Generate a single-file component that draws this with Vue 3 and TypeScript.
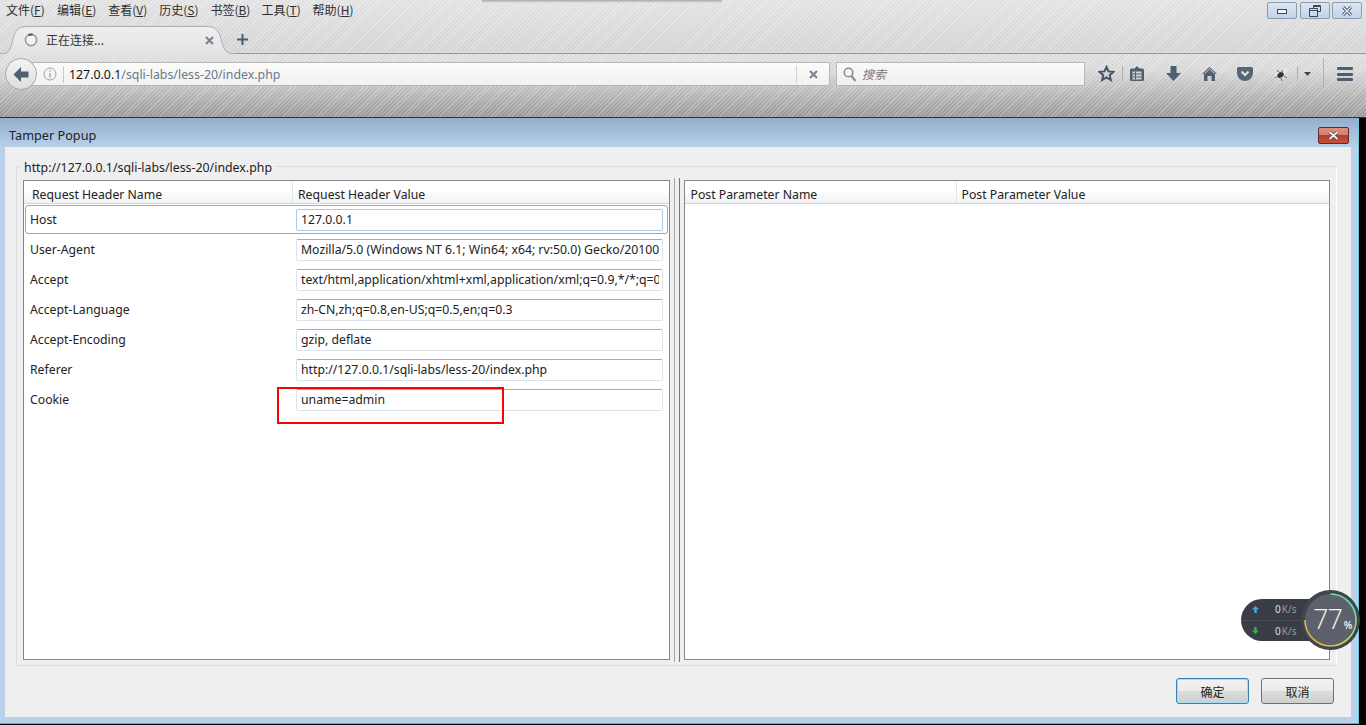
<script setup lang="ts">
const menus = [
  { cn: '文件', key: 'F' },
  { cn: '编辑', key: 'E' },
  { cn: '查看', key: 'V' },
  { cn: '历史', key: 'S' },
  { cn: '书签', key: 'B' },
  { cn: '工具', key: 'T' },
  { cn: '帮助', key: 'H' },
]
const rows = [
  { name: 'Host', value: '127.0.0.1' },
  { name: 'User-Agent', value: 'Mozilla/5.0 (Windows NT 6.1; Win64; x64; rv:50.0) Gecko/20100101 Firefox/50.0' },
  { name: 'Accept', value: 'text/html,application/xhtml+xml,application/xml;q=0.9,*/*;q=0.8' },
  { name: 'Accept-Language', value: 'zh-CN,zh;q=0.8,en-US;q=0.5,en;q=0.3' },
  { name: 'Accept-Encoding', value: 'gzip, deflate' },
  { name: 'Referer', value: 'http://127.0.0.1/sqli-labs/less-20/index.php' },
  { name: 'Cookie', value: 'uname=admin' },
]
</script>

<template>
  <div class="screen">
    <header class="browser">
      <div class="topshadow" />
      <nav class="menubar">
        <span v-for="m in menus" :key="m.key" class="menu">{{ m.cn }}(<u>{{ m.key }}</u>)</span>
        <div class="wincaps">
          <span class="cap"><svg width="12" height="8" viewBox="0 0 12 8"><rect x="1.500" y="2.500" width="9" height="4" fill="#f4f6f9" stroke="#38465a" /></svg></span>
          <span class="cap"><svg width="12" height="12" viewBox="0 0 12 12"><path d="M4.500 3V.5h7v6H8.500M.5 3.500h8v8h-8zM.5 5.500h8M4.500 1.500h7" fill="none" stroke="#38465a" /></svg></span>
          <span class="cap"><svg width="12" height="10" viewBox="0 0 12 10"><path d="M2 1l8 8M10 1l-8 8" stroke="#38465a" stroke-width="3" /><path d="M2 1l8 8M10 1l-8 8" stroke="#f4f6f9" stroke-width="1.200" /></svg></span>
        </div>
      </nav>
      <div class="tabstrip">
        <div class="tab">
          <svg class="tabshape" width="236" height="28" viewBox="0 0 236 28">
            <defs>
              <linearGradient id="tabfill" x1="0" y1="0" x2="0" y2="1">
                <stop offset="0" stop-color="#efefef" />
                <stop offset="1" stop-color="#e4e4e4" />
              </linearGradient>
            </defs>
            <path d="M0 28V27.500H3C10 27.500 11 21 13 13C15 4 19 .5 27 .5H207C215 .5 219 4 221 13C223 21 225 27.500 233 27.500H236V28z" fill="url(#tabfill)" />
            <path d="M0 27.500H3C10 27.500 11 21 13 13C15 4 19 .5 27 .5H207C215 .5 219 4 221 13C223 21 225 27.500 233 27.500H236" fill="none" stroke="#a7adb4" />
          </svg>
          <svg class="spinner" width="14" height="14" viewBox="0 0 14 14"><circle cx="7" cy="7" r="5.600" fill="#f4f4f4" stroke="#9a9a9a" stroke-width="1.600" /><path d="M4.500 2.200a5.600 5.600 0 0 1 4-.6" stroke="#555" stroke-width="2" fill="none" /></svg>
          <span class="tabtitle">正在连接...</span>
          <svg class="tabclose" width="9" height="9" viewBox="0 0 9 9"><path d="M1 1l7 7M8 1l-7 7" stroke="#7b8592" stroke-width="2.200" /></svg>
        </div>
        <svg class="newtab" width="11" height="11" viewBox="0 0 11 11"><path d="M5.500 0v11M0 5.500h11" stroke="#4d5a69" stroke-width="2" /></svg>
      </div>
      <div class="navbar">
        <div class="backbtn"><svg width="16" height="15" viewBox="0 0 16 15"><path d="M8 0L.5 7.500 8 15v-4.500h7.500v-6H8z" fill="#4f5e70" /></svg></div>
        <div class="urlbar">
          <svg class="info" width="14" height="14" viewBox="0 0 14 14"><circle cx="7" cy="7" r="6" fill="none" stroke="#9aa0a6" /><path d="M7 6v4.500M7 3.300v1.500" stroke="#9aa0a6" stroke-width="1.400" /></svg>
          <span class="url"><b>127.0.0.1</b>/sqli-labs/less-20/index.php</span>
          <span class="urlstop"><svg width="9" height="9" viewBox="0 0 9 9"><path d="M1 1l7 7M8 1l-7 7" stroke="#7b8592" stroke-width="2.200" /></svg></span>
        </div>
        <div class="search">
          <svg width="14" height="15" viewBox="0 0 14 15"><circle cx="5.500" cy="5.500" r="4.300" fill="none" stroke="#8d8d8d" stroke-width="1.600" /><path d="M8.500 9l4 5" stroke="#8d8d8d" stroke-width="2.200" /></svg>
          <span class="searchtext">搜索</span>
        </div>
        <div class="tools">
          <svg class="t-star" width="17" height="17" viewBox="0 0 17 17"><path d="M8.500 1.800l2 4.600 5 .5-3.800 3.300 1.200 4.900-4.400-2.600-4.400 2.600 1.200-4.900L1.500 6.900l5-.5z" fill="none" stroke="#46566a" stroke-width="2" /></svg>
          <i class="sep" />
          <svg class="t-clip" width="14" height="15" viewBox="0 0 14 15"><path d="M1.500 2.500H4.500L7 0l2.500 2.500h3A1.500 1.500 0 0 1 14 4v9.500a1.500 1.500 0 0 1-1.500 1.500h-11A1.500 1.500 0 0 1 0 13.500V4a1.500 1.500 0 0 1 1.500-1.500z" fill="#4f5e70" /><path d="M2.500 5.500h9v8h-9z" fill="#d4d4d4" /><path d="M2.500 8h9M2.500 11h9M5.500 5.500v8" stroke="#4f5e70" /></svg>
          <svg class="t-down" width="15" height="15" viewBox="0 0 15 15"><path d="M4.500 0h6v7H15l-7.500 8L0 7h4.500z" fill="#4f5e70" /></svg>
          <svg class="t-home" width="15" height="14" viewBox="0 0 15 14"><path d="M7.500 0L15 7h-2v7H9.500V9h-4v5H2V7H0z" fill="#4f5e70" /><path d="M2.500 6.700l5-4.700 5 4.700" fill="none" stroke="#d8d8d8" /></svg>
          <svg class="t-pocket" width="16" height="14" viewBox="0 0 16 14"><path d="M1.500 0h13A1.500 1.500 0 0 1 16 1.500V6A8 8 0 0 1 0 6V1.500A1.500 1.500 0 0 1 1.500 0z" fill="#56667a" /><path d="M4.500 4.500L8 8l3.500-3.500" fill="none" stroke="#e4e4e4" stroke-width="2" /></svg>
          <svg class="t-ext" width="16" height="13" viewBox="0 0 16 13"><path d="M9 1l6-1-1 5-4 1zM1 6l5-2 1 4-4 3z" fill="#e6e6e6" /><ellipse cx="7.500" cy="7" rx="3.500" ry="2.500" transform="rotate(-35 7.500 7)" fill="#333" /><path d="M4 2l3 3M11 8l3 2M2 10l3-2M8 10l1 3M10 2l-2 3" stroke="#666" /></svg>
          <i class="sep sep2" />
          <svg class="t-caret" width="7" height="4" viewBox="0 0 7 4"><path d="M0 0h7L3.500 4z" fill="#39475a" /></svg>
          <i class="sep sep3" />
          <span class="burger"><i /><i /><i /></span>
        </div>
      </div>
    </header>

    <section class="dialog">
      <div class="titlebar">
        <span class="dtitle">Tamper Popup</span>
        <span class="dclose"><svg width="11" height="9" viewBox="0 0 11 9"><path d="M1.500 1l8 7M9.500 1l-8 7" stroke="#4e3a40" stroke-width="3.200" /><path d="M1.500 1l8 7M9.500 1l-8 7" stroke="#f4f4f6" stroke-width="1.800" /></svg></span>
      </div>
      <div class="client">
        <div class="group">
          <span class="legend">http://127.0.0.1/sqli-labs/less-20/index.php</span>
          <div class="panes">
            <div class="pane">
              <div class="thead">
                <span class="th th-left">Request Header Name</span>
                <span class="th">Request Header Value</span>
              </div>
              <div v-for="(r, i) in rows" :key="r.name" class="row" :class="{ selected: i === 0 }">
                <span class="rname">{{ r.name }}</span>
                <span class="rvalue"><span class="rtext">{{ r.value }}</span></span>
              </div>
            </div>
            <div class="splitter" />
            <div class="pane">
              <div class="thead">
                <span class="th th-post">Post Parameter Name</span>
                <span class="th">Post Parameter Value</span>
              </div>
            </div>
          </div>
        </div>
        <div class="buttons">
          <button class="btn primary">确定</button>
          <button class="btn">取消</button>
        </div>
      </div>
      <div class="highlight" />
      <div class="speed">
        <div class="pill">
          <div class="line"><svg width="7" height="7" viewBox="0 0 7 7"><path d="M3.500 0L7 3.500H4.700V7H2.300V3.500H0z" fill="#4aa8e8" /></svg><span class="val">0</span><span class="unit">K/s</span></div>
          <div class="line"><svg width="7" height="7" viewBox="0 0 7 7"><path d="M3.500 7L7 3.500H4.700V0H2.300V3.500H0z" fill="#3fae49" /></svg><span class="val">0</span><span class="unit">K/s</span></div>
        </div>
        <div class="gauge">
          <svg width="59" height="60" viewBox="0 0 60 60" preserveAspectRatio="none">
            <defs>
              <linearGradient id="ring" x1="1" y1="0" x2="0" y2="1">
                <stop offset="0" stop-color="#45e0d0" />
                <stop offset=".55" stop-color="#c4dc58" />
                <stop offset="1" stop-color="#f09a3c" />
              </linearGradient>
            </defs>
            <circle cx="30" cy="30" r="30" fill="#41454e" />
            <circle cx="30" cy="30" r="26" fill="#5d616c" />
            <path d="M30 4A26 26 0 1 1 4 30" fill="none" stroke="url(#ring)" stroke-width="1.600" />
          </svg>
          <span class="pct">77<small>%</small></span>
        </div>
      </div>
    </section>
  </div>
</template>

<style>
html, body { margin: 0; background: #000; }
</style>

<style scoped>
.screen { width: 1366px; height: 725px; overflow: hidden; position: relative; background: #000; font-family: "Noto Sans", "Noto Sans CJK SC", sans-serif; }
.browser {
  height: 118px; box-sizing: border-box; position: relative;
  border-bottom: 1px solid #333;
  background:
    repeating-linear-gradient(135deg, rgba(255,255,255,.22) 0 1px, rgba(0,0,0,.02) 1px 3px),
    linear-gradient(#e6e6e6 0, #d8d8d8 52px, #e2e2e2 53px, #dcdcdc 70px, #9c9c9c 117px);
}
.topshadow { position: absolute; left: 482px; top: 0; width: 240px; height: 3px; background: linear-gradient(#a8a8a8, rgba(168,168,168,0)); }
.menubar { height: 21px; display: flex; align-items: center; padding: 0 0 3px 6px; box-sizing: border-box; gap: 10.100px; font: 12px "Noto Sans CJK SC", sans-serif; color: #2e2e2e; position: relative; }
.menu { width: 41px; white-space: nowrap; }
.wincaps { position: absolute; left: 1267px; top: 2px; display: flex; gap: 2.500px; }
.cap { width: 30px; height: 17px; box-sizing: border-box; border: 1px solid #8b9cb2; border-radius: 2px; background: linear-gradient(#dbe6f3, #c2d3e8); display: flex; align-items: center; justify-content: center; }
.tabstrip { height: 33px; display: flex; align-items: flex-end; position: relative; border-bottom: 1px solid #8e98a2; box-sizing: border-box; }
.tab { margin-left: 14px; width: 213px; height: 28px; margin-bottom: -1px; box-sizing: border-box; position: relative; display: flex; align-items: center; padding: 0 13px 0 10px; font: 12px "Noto Sans CJK SC", sans-serif; color: #333; }
.tabshape { position: absolute; left: -14px; top: 0; }
.spinner { flex: none; margin-right: 8px; position: relative; }
.tabtitle { flex: 1; position: relative; margin-top: -2px; }
.tabclose { position: relative; }
.newtab { margin: 0 0 8px 10px; }
.navbar { height: 44px; display: flex; align-items: flex-start; position: relative; padding-top: 8px; box-sizing: border-box; }
.backbtn { position: absolute; left: 5px; top: 4px; width: 32px; height: 32px; border-radius: 50%; border: 1px solid #a8a8a8; background: linear-gradient(#f4f4f4, #dedede); display: flex; align-items: center; justify-content: center; box-sizing: border-box; z-index: 1; }
.urlbar { margin-left: 26px; width: 804px; height: 24px; box-sizing: border-box; border: 1px solid #b4b8bd; border-radius: 0 2px 2px 0; background: linear-gradient(#fbfbfb, #f2f2f2); display: flex; align-items: center; padding-left: 16px; font: 12.350px "Noto Sans", sans-serif; color: #6b7785; }
.info { flex: none; margin-right: 6px; }
.url { flex: 1; border-left: 1px solid #c8c8c8; padding-left: 5px; line-height: 17px; }
.url b { font-weight: 400; color: #111; }
.urlstop { width: 32px; height: 17px; border-left: 1px solid #d0d0d0; display: flex; align-items: center; justify-content: center; }
.search { margin-left: 6px; width: 249px; height: 24px; box-sizing: border-box; border: 1px solid #b4b8bd; background: linear-gradient(#f9f9f9, #f0f0f0); display: flex; align-items: center; padding-left: 6px; gap: 5px; }
.searchtext { font: italic 12px "Noto Sans CJK SC", sans-serif; color: #777; margin-top: -2px; }
.tools { flex: 1; position: relative; height: 24px; }
.tools > * { position: absolute; }
.t-star { left: 13px; top: 3px; }
.sep { width: 1px; height: 15px; background: #b0b0b0; left: 37px; top: 4px; }
.t-clip { left: 45px; top: 4px; }
.t-down { left: 81px; top: 4px; }
.t-home { left: 117px; top: 5px; }
.t-pocket { left: 152px; top: 5px; }
.t-ext { left: 188px; top: 6px; }
.sep2 { left: 212px; }
.t-caret { left: 219px; top: 10px; }
.sep3 { left: 238px; top: -4px; height: 30px; }
.burger { left: 252px; top: 5px; width: 16px; display: flex; flex-direction: column; gap: 2.500px; }
.burger i { height: 3px; background: #4f5e70; border-radius: 1px; }

.dialog { position: relative; width: 1359px; height: 606px; box-sizing: border-box; background: #b9d1ea; border-bottom: 1px solid #3fb0e0; border-right: 1px solid #6fc6dc; display: flex; flex-direction: column; }
.titlebar { height: 29px; flex: none; position: relative; background: linear-gradient(#93aecd, #b8d1ea); display: flex; align-items: center; padding: 4px 0 0 9px; box-sizing: border-box; font-size: 12.700px; color: #222; }
.dclose { position: absolute; left: 1318px; top: 9px; width: 31px; height: 17px; box-sizing: border-box; border: 1px solid #5a2a35; border-radius: 2px; background: linear-gradient(#dc8f80 0, #d77f70 45%, #b5402c 50%, #c2513c 100%); display: flex; align-items: center; justify-content: center; }
.client { flex: none; margin-left: 5px; width: 1346px; height: 570px; box-sizing: border-box; background: #efefef; position: relative; padding: 19px 14px 0 11px; }
.group { height: 500px; width: 1321px; box-sizing: border-box; border: 1px solid #dcdcdc; border-right-color: #fff; border-bottom-color: #d5e0ea; border-radius: 2px; position: relative; padding: 13px 6px 6px 6px; }
.legend { position: absolute; left: 4px; top: -7px; padding: 0 3px; background: #efefef; font-size: 12.350px; line-height: 16px; color: #222; }
.panes { display: flex; height: 480px; }
.pane { width: 647px; box-sizing: border-box; border: 1px solid #828790; background: #fff; font-size: 12.250px; color: #222; }
.splitter { width: 14px; flex: none; position: relative; }
.splitter::before { content: ""; position: absolute; left: 4px; width: 6px; top: -2px; bottom: -2px; box-sizing: border-box; border-left: 1px solid #a8a8a8; border-right: 1px solid #777; }
.thead { height: 23px; box-sizing: border-box; display: flex; background: linear-gradient(#fff 40%, #f1f2f4); border-bottom: 1px solid #d5d5d5; line-height: 27px; }
.th { padding-left: 5px; border-left: 1px solid #e5e5e5; white-space: nowrap; }
.th-left { width: 260px; padding-left: 8px; border-left: 0; }
.th-post { width: 265px; padding-left: 6px; border-left: 0; }
.row { height: 30px; display: flex; align-items: center; box-sizing: border-box; margin: 0 1px; padding: 1px 0 0 5px; }
.row.selected { height: 29px; margin-top: 1px; border: 1px solid #84acdd; border-radius: 3px; padding: 0 0 0 4px; }
.rname { width: 266px; flex: none; line-height: 20px; }
.rvalue { width: 367px; height: 22px; box-sizing: border-box; flex: none; border: 1px solid #dde3ec; border-top-color: #a9abae; border-radius: 2px; padding-left: 4px; line-height: 19px; overflow: hidden; white-space: nowrap; background: #fff; }
.row.selected .rvalue { border: 1px solid #a5cbee; }
.rtext { display: block; width: 358px; overflow: hidden; }
.buttons { position: absolute; left: 1171px; top: 531px; display: flex; gap: 12px; }
.btn { width: 73px; height: 26px; padding: 0; box-sizing: border-box; border: 1px solid #707070; border-radius: 3px; background: linear-gradient(#f2f2f2 0, #ebebeb 48%, #dcdcdc 52%, #cfcfcf 100%); font: 12px "Noto Sans CJK SC", sans-serif; color: #222; }
.btn.primary { border-color: #3c7fb1; box-shadow: inset 0 0 0 1px #a9dcf5; }
.highlight { position: absolute; left: 277px; top: 269px; width: 227px; height: 37px; box-sizing: border-box; border: 2px solid #f00; pointer-events: none; }
.speed { position: absolute; left: 1241px; top: 471px; width: 119px; height: 62px; }
.pill { position: absolute; left: 0; top: 10px; width: 90px; height: 42px; border-radius: 21px; background: #3a3d45; color: #ddd; display: flex; flex-direction: column; }
.line { flex: 1; display: flex; align-items: center; padding-left: 11px; font-size: 10px; }
.line + .line { border-top: 1px solid #4a4d55; }
.val { margin-left: 16px; font-size: 10px; }
.unit { color: #999; font-size: 10px; margin-left: 1px; }
.gauge { position: absolute; left: 60px; top: 1px; width: 59px; height: 60px; }
.pct { position: absolute; left: 12px; top: 11px; color: #f3f3f3; font: 300 27px/36px "Open Sans", sans-serif; letter-spacing: -1px; }
.pct small { font-size: 10px; font-weight: 600; margin-left: 2px; letter-spacing: 0; }
</style>
